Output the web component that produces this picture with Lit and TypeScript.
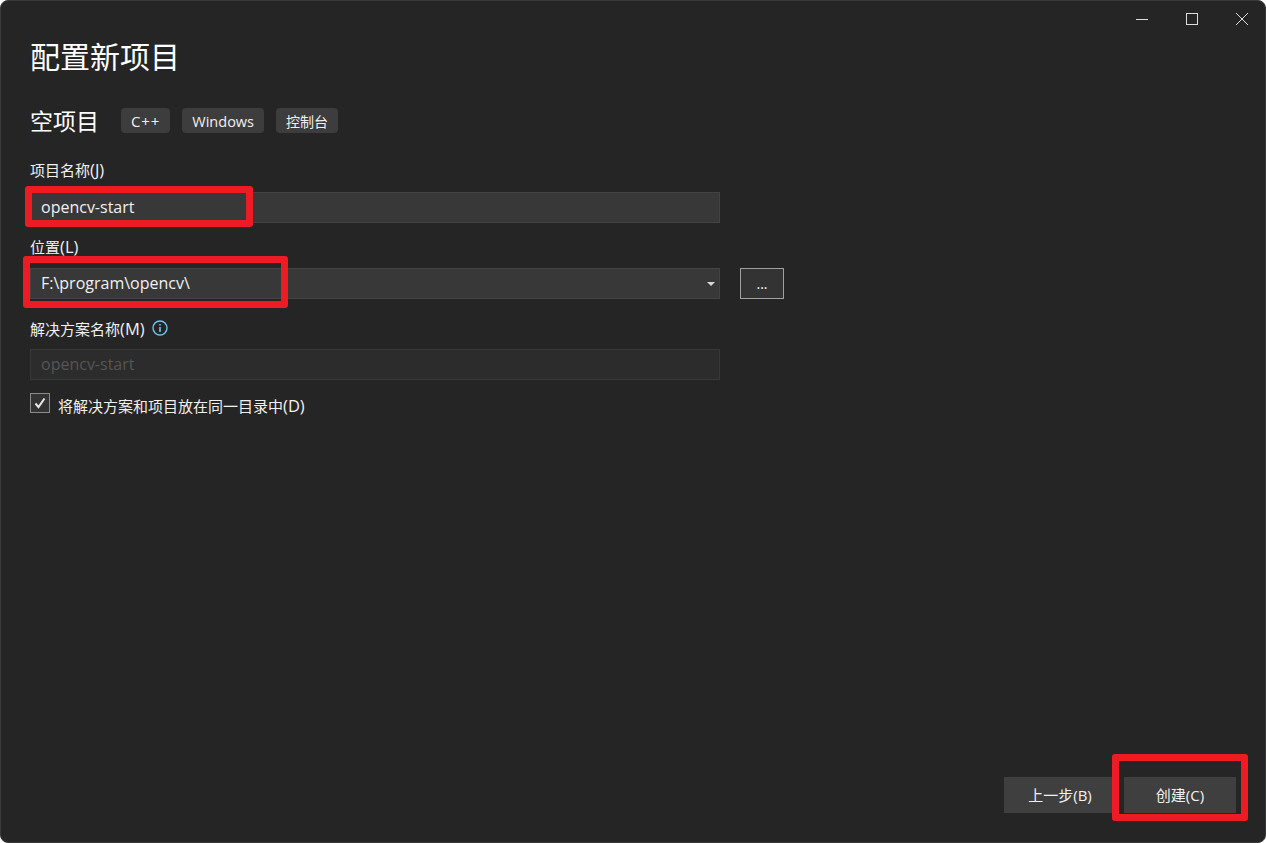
import { LitElement, html, css } from "lit";
import { customElement } from "lit/decorators.js";

@customElement("app-root")
export class AppRoot extends LitElement {
  static styles = css`
    :host { display: block; width: 1266px; height: 843px; background: #fff; overflow: hidden;
      font-family: "Noto Sans CJK SC", "Open Sans", sans-serif; }
    * { box-sizing: border-box; }
    .win { position: relative; width: 1266px; height: 843px; background: #252525; border: 1px solid #3a3a3a; border-radius: 8px; color: #f1f1f1; overflow: hidden; }
    .latin { font-family: "Open Sans", "Noto Sans CJK SC", sans-serif; }
    .acc { font-size: 16.5px; }
    .ctrl { position: absolute; top: 0; right: -2px; display: flex; }
    .ctrl div { width: 50px; height: 36px; display: flex; align-items: center; justify-content: center; }
    .main { padding: 31px 0 0 29px; display: flex; flex-direction: column; }
    h1 { margin: 0; font-size: 30px; font-weight: 400; line-height: 46px; color: #fff; }
    .sub { display: flex; align-items: center; margin-top: 24px; height: 36px; }
    h2 { margin: 0 22px 0 0; font-size: 23px; font-weight: 400; color: #fff; line-height: 36px; }
    .tag { height: 25px; padding: 0 10px; background: #3d3d3d; border-radius: 4px; font-size: 14.5px; line-height: 27px; margin-right: 12px; color: #f1f1f1; }
    .tag.cpp { font-size: 15px; letter-spacing: 0.9px; }
    .tag.cjk { font-size: 14px; }
    .label { font-size: 15px; line-height: 20px; color: #f1f1f1; height: 20px; display: flex; align-items: center; }
    .label-text { padding-top: 2px; }
    .l1 { margin-top: 21px; }
    .l2 { margin-top: 13px; }
    .l3 { margin-top: 19px; }
    .input { width: 690px; height: 31px; background: #383838; border: 1px solid #434343; padding-left: 10px; font-size: 16px; line-height: 29px; color: #f1f1f1; }
    .i1 { margin-top: 13px; }
    .i3 { margin-top: 11px; }
    .row { display: flex; align-items: center; margin-top: 12px; }
    .combo { position: relative; }
    .caret { position: absolute; right: 4px; top: 13px; width: 0; height: 0; border-left: 4px solid transparent; border-right: 4px solid transparent; border-top: 4px solid #d8d8d8; }
    .browse { width: 44px; height: 31px; margin-left: 20px; border: 1px solid #a0a0a0; background: #333; font-size: 14px; line-height: 29px; text-align: center; color: #fff; }
    .disabled { background: #2c2c2c; border-color: #383838; color: #555; }
    .info { margin-left: 7px; }
    .check { display: flex; align-items: flex-start; margin-top: 13px; font-size: 15px; }
    .check-text { line-height: 20px; padding-top: 3px; }
    .box { width: 20px; height: 20px; border: 1px solid #8a8a8a; background: #333; margin-right: 8px; display: flex; align-items: center; justify-content: center; }
    .foot { position: absolute; right: 29px; bottom: 29px; display: flex; gap: 8px; }
    .btn { width: 112px; height: 36px; background: #3f3f3f; font-size: 15px; line-height: 36px; text-align: center; color: #f1f1f1; }
    .mark { position: absolute; border: 7px solid #ed1c24; border-radius: 3px; pointer-events: none; }
    .m1 { left: 24px; top: 185px; width: 228px; height: 41px; }
    .m2 { left: 22px; top: 255px; width: 265px; height: 52px; }
    .m3 { left: 1111px; top: 753px; width: 136px; height: 67px; }
  `;

  render() {
    return html`<div class="win">
      <div class="ctrl">
        <div><svg width="14" height="14" viewBox="0 0 14 14"><path d="M1 7.5H13" stroke="#ddd" fill="none"/></svg></div>
        <div><svg width="14" height="14" viewBox="0 0 14 14"><rect x="1.5" y="1.5" width="11" height="11" stroke="#ddd" fill="none"/></svg></div>
        <div><svg width="14" height="14" viewBox="0 0 14 14"><path d="M1 1L13 13M13 1L1 13" stroke="#ddd" fill="none"/></svg></div>
      </div>
      <div class="main">
        <h1>配置新项目</h1>
        <div class="sub"><h2>空项目</h2>
          <span class="tag cpp latin">C++</span><span class="tag latin">Windows</span><span class="tag cjk">控制台</span></div>
        <div class="label l1 latin"><span class="label-text">项目名称<span class="acc">(J)</span></span></div>
        <div class="input i1 latin">opencv-start</div>
        <div class="label l2 latin"><span class="label-text">位置<span class="acc">(L)</span></span></div>
        <div class="row">
          <div class="input combo latin">F:\\program\\opencv\\<span class="caret"></span></div>
          <div class="browse latin">...</div>
        </div>
        <div class="label l3 latin"><span class="label-text">解决方案名称<span class="acc">(M)</span></span>
          <svg class="info" width="16" height="16" viewBox="0 0 16 16"><circle cx="8" cy="8" r="7" fill="none" stroke="#6cc6ee" stroke-width="1.4"/><path d="M8 7v5M8 4v1.6" stroke="#6cc6ee" stroke-width="1.6" fill="none"/></svg>
        </div>
        <div class="input i3 disabled latin">opencv-start</div>
        <div class="check latin"><span class="box"><svg width="14" height="14" viewBox="0 0 14 14"><path d="M2.5 7.5L5.5 11L11.5 2.5" stroke="#e8e8e8" stroke-width="2" fill="none"/></svg></span><span class="check-text">将解决方案和项目放在同一目录中<span class="acc">(D)</span></span></div>
      </div>
      <div class="foot latin"><div class="btn">上一步(B)</div><div class="btn">创建(C)</div></div>
      <div class="mark m1"></div>
      <div class="mark m2"></div>
      <div class="mark m3"></div>
    </div>`;
  }
}
